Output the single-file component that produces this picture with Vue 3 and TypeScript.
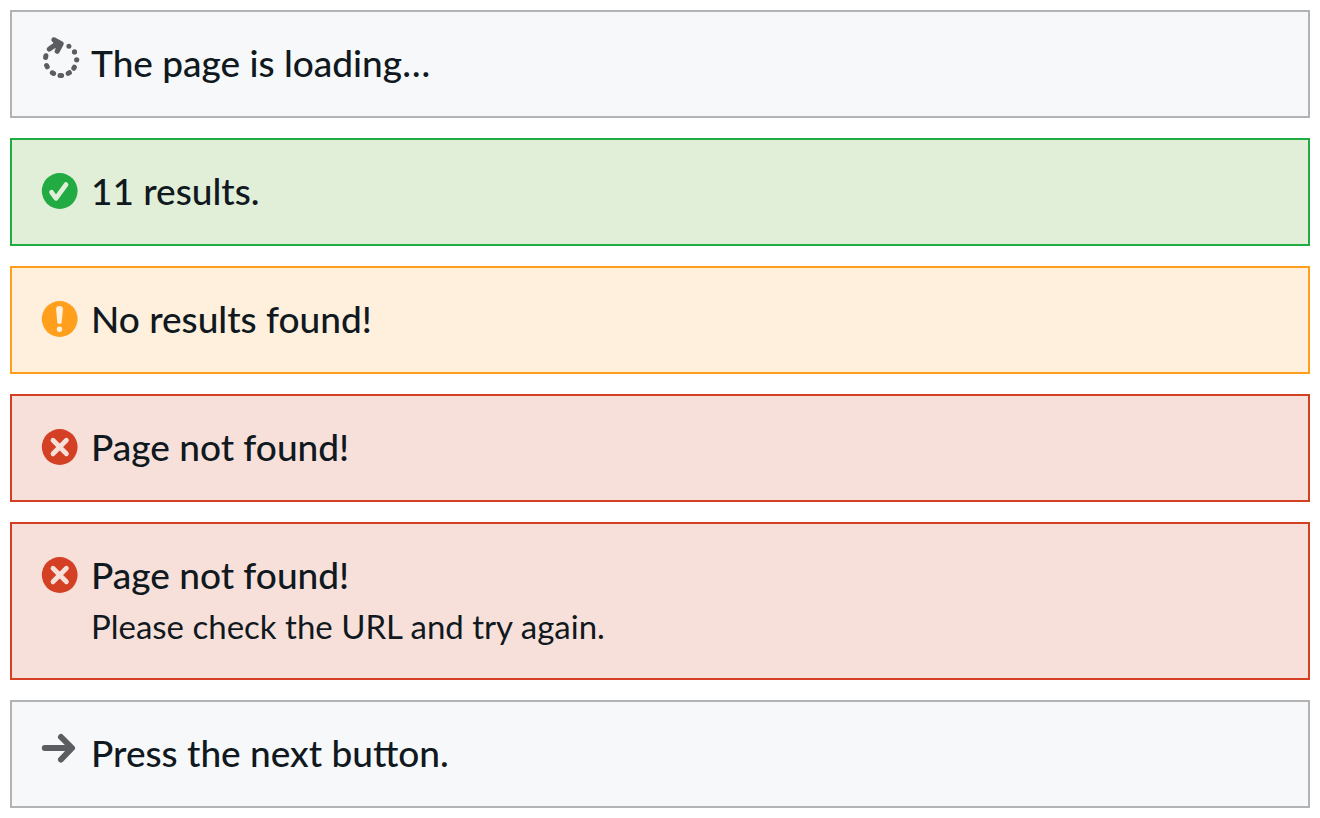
<script setup lang="ts">
type Kind = 'loading' | 'success' | 'warning' | 'error' | 'next'

interface Message {
  kind: Kind
  title: string
  detail?: string
}

const messages: Message[] = [
  { kind: 'loading', title: 'The page is loading…' },
  { kind: 'success', title: '11 results.' },
  { kind: 'warning', title: 'No results found!' },
  { kind: 'error', title: 'Page not found!' },
  { kind: 'error', title: 'Page not found!', detail: 'Please check the URL and try again.' },
  { kind: 'next', title: 'Press the next button.' },
]
</script>

<template>
  <main class="messages">
    <section v-for="(message, i) in messages" :key="i" class="message" :class="message.kind" role="status">
      <svg class="icon" viewBox="0 0 36 48" aria-hidden="true">
        <g v-if="message.kind === 'loading'" fill="none" stroke="currentColor" stroke-linecap="round" stroke-linejoin="round">
          <g fill="currentColor" stroke="none">
            <circle cx="26.9" cy="6.2" r="2.5" />
            <circle cx="32.5" cy="11.9" r="2.6" />
            <circle cx="34.7" cy="19.8" r="2.6" />
          </g>
          <g stroke-width="5">
            <path d="M32.4 27.2l-.6 1.1M27.4 32.7l-1.2.7M19.6 35.4h-1.6M11.6 33.5l-1.3-.7M5.2 26.8l-.6-1.3M3.6 17.5l.3-1.7" />
            <path d="M7.2 9.2Q11.5 5.5 17 4" />
            <path d="M11.9-.2L19.2 3.8L15.2 11.3" />
          </g>
          <path d="M12 3L19 4L15 9Z" fill="currentColor" stroke-width="2" />
        </g>
        <g v-else-if="message.kind === 'next'" fill="none" stroke="currentColor" stroke-width="6" stroke-linecap="round" stroke-linejoin="round">
          <path d="M2.8 18h27M19 7l11 11L19 29.5" />
        </g>
        <g v-else>
          <circle cx="17.7" cy="23" r="17.9" fill="currentColor" />
          <path v-if="message.kind === 'success'" class="mark" d="M9.6 24.3l4.4 6L24 16.6" stroke-width="4.8" />
          <path v-else-if="message.kind === 'error'" class="mark" d="M11 16.3l13.4 13.4M24.4 16.3L11 29.7" stroke-width="4.8" />
          <g v-else class="bang">
            <path d="M14.1 13.2Q14.1 10 17.5 10T20.9 13.2L19.7 26.3Q19.5 28 17.5 28T15.3 26.3Z" />
            <circle cx="17.5" cy="33.2" r="2.7" />
          </g>
        </g>
      </svg>
      <div class="body">
        <h2>{{ message.title }}</h2>
        <p v-if="message.detail">{{ message.detail }}</p>
      </div>
    </section>
  </main>
</template>

<style>
body {
  margin: 0;
  background: #fff;
}
</style>

<style scoped>
.messages {
  display: flex;
  flex-direction: column;
  gap: 20px;
  padding: 10px;
  color: #101820;
  font-family: Lato, "Open Sans", sans-serif;
}
.message {
  display: flex;
  gap: 13px;
  padding: 28px 30px;
  border: 2px solid var(--accent);
  background: var(--fill);
}
.loading,
.next {
  --accent: #b1b3b5;
  --fill: #f7f8fa;
}
.success {
  --accent: #22ab43;
  --fill: #e1eed8;
}
.warning {
  --accent: #ff9f1c;
  --fill: #ffefdd;
}
.error {
  --accent: #d34024;
  --fill: #f7e0da;
}
.icon {
  flex: none;
  width: 36px;
  height: 48px;
  overflow: visible;
  color: var(--accent);
}
.loading .icon,
.next .icon {
  color: #5b5d60;
}
.mark {
  fill: none;
  stroke: var(--fill);
  stroke-linecap: round;
  stroke-linejoin: round;
}
.bang {
  fill: var(--fill);
}
h2,
p {
  margin: 0;
}
h2 {
  font-size: 37px;
  font-weight: 500;
  line-height: 46px;
}
p {
  margin-top: 4px;
  font-size: 33px;
  font-weight: 400;
  line-height: 48px;
}
</style>
